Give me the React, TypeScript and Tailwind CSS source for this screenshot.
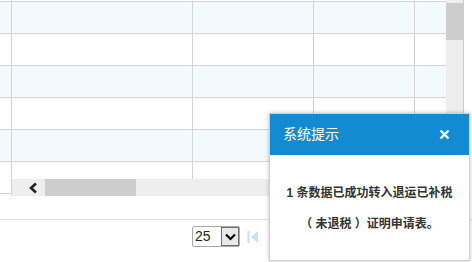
import React from "react";

const font = { fontFamily: '"Liberation Sans", "Noto Sans CJK SC", sans-serif' };

// striped data rows, cut off at the top and bottom like the screenshot
const rows = [true, false, true, false, true, false];

function Row({ striped, last }: { striped: boolean; last?: boolean }) {
  const bg = striped ? "bg-[#f2fafd]" : "bg-white";
  return (
    <div className={`flex ${last ? "h-[17px]" : "h-[32px] border-b border-[#d4d4d4]"} ${bg}`}>
      <div className="w-[181px] border-r border-[#d4d4d4]" />
      <div className="w-[121px] border-r border-[#d4d4d4]" />
      <div className="w-[101px] border-r border-[#d4d4d4]" />
      <div className="flex-1" />
    </div>
  );
}

function FrozenColumn() {
  return (
    <div className="w-[12px] flex flex-col border-r border-[#d4d4d4] h-[196px]">
      <div className="h-[2px] border-b border-[#d4d4d4]" />
      {rows.map((s, i) => (
        <div key={i} className={`h-[32px] border-b border-[#d4d4d4] ${s ? "bg-[#f2fafd]" : "bg-white"}`} />
      ))}
    </div>
  );
}

function HScrollbar() {
  return (
    <div className="h-[17px] bg-[#eeeeee] flex items-center">
      <div className="w-[33px] h-full flex items-center justify-center pl-[8px]">
        <svg width="10" height="12" viewBox="0 0 10 12">
          <path d="M8 1.5 L3 6 L8 10.5" fill="none" stroke="#222" strokeWidth="2.6" />
        </svg>
      </div>
      <div className="w-[91px] h-full bg-[#cdcdcd]" />
    </div>
  );
}

function VScrollbar() {
  return (
    <div className="w-[17px] h-[196px] bg-[#eeeeee] pt-[3px]">
      <div className="h-[37px] bg-[#cdcdcd]" />
    </div>
  );
}

function Dialog() {
  return (
    <div
      className="absolute left-[269px] top-[113px] w-[201px] h-[148px] bg-white border border-[#d0d0d0] shadow-[0_0_4px_rgba(0,0,0,0.25)] flex flex-col"
      style={font}
    >
      <div className="h-[41px] bg-[#128bd2] flex items-center justify-between pl-[13px] pr-[19px]">
        <span className="text-[14px] text-white">系统提示</span>
        <svg width="11" height="11" viewBox="0 0 11 11">
          <path d="M1.5 1.5 L9.5 9.5 M9.5 1.5 L1.5 9.5" stroke="#fff" strokeWidth="2.4" />
        </svg>
      </div>
      <div className="flex-1 pt-[23px] text-center text-[12px] font-bold text-[#333] leading-[31px]">
        <p>1 条数据已成功转入退运已补税</p>
        <p>（ 未退税 ）证明申请表。</p>
      </div>
    </div>
  );
}

export default function App() {
  return (
    <div className="relative w-[472px] h-[262px] bg-white overflow-hidden" style={font}>
      {/* grid */}
      <div className="flex w-[464px] border-r border-[#cccccc]">
        <FrozenColumn />
        <div className="flex-1 flex flex-col h-[196px]">
          <div className="h-[2px] border-b border-[#d4d4d4]" />
          {rows.map((s, i) => (
            <Row key={i} striped={s} last={i === rows.length - 1} />
          ))}
          <HScrollbar />
        </div>
        <VScrollbar />
      </div>

      {/* pager */}
      <div className="mt-[23px] border-t border-[#e3e3e3] pt-[6px] flex items-center pl-[192px] gap-[7px]">
        <div className="flex h-[21px] border border-[#a9a9a9] rounded-[2px] bg-white">
          <span className="w-[28px] pl-[2px] text-[14px] leading-[19px] text-[#222]">25</span>
          <div className="w-[18px] border border-[#707070] bg-[#e8e8e8] flex items-center justify-center">
            <svg width="11" height="8" viewBox="0 0 11 8">
              <path d="M1 1.5 L5.5 6 L10 1.5" fill="none" stroke="#000" strokeWidth="2.2" />
            </svg>
          </div>
        </div>
        <svg width="12" height="12" viewBox="0 0 12 12">
          <rect x="0.5" y="0" width="2" height="12" fill="#c4e3f6" />
          <path d="M11 0 L4 6 L11 12 Z" fill="#c4e3f6" />
        </svg>
      </div>

      <Dialog />
    </div>
  );
}
